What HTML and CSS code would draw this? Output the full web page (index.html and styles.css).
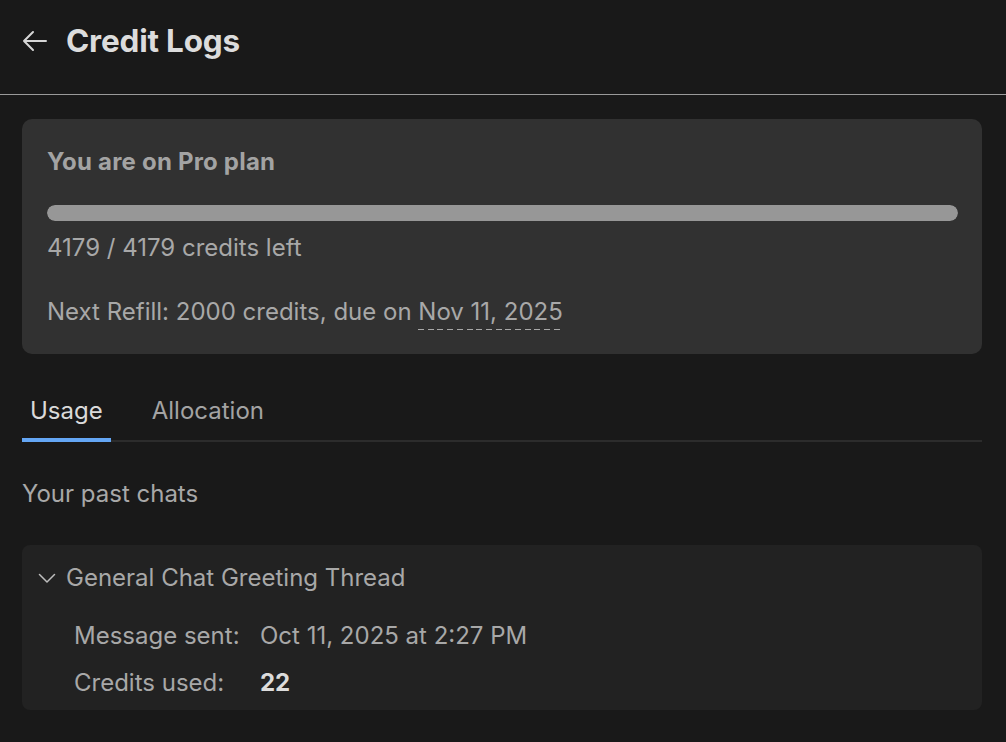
FILE: index.html
```html
<!DOCTYPE html>
<html>
<head>
<meta charset="utf-8">
<link rel="stylesheet" href="styles.css">
</head>
<body>
<header class="topbar">
  <svg class="back" width="26" height="22" viewBox="0 0 26 22" fill="none" stroke="#d6d6d6" stroke-width="2" stroke-linecap="round" stroke-linejoin="round">
    <path d="M24 11H2M11 2L2 11l9 9"/>
  </svg>
  <h1 class="title">Credit Logs</h1>
</header>
<main class="content">
  <section class="plan">
    <div class="plan-title">You are on Pro plan</div>
    <div class="bar"><div class="bar-fill" style="width:100%"></div></div>
    <div class="plan-line">4179 / 4179 credits left</div>
    <div class="plan-line refill">Next Refill: 2000 credits, due on <span class="date">Nov 11, 2025</span></div>
  </section>
  <nav class="tabs">
    <div class="tab active">Usage</div>
    <div class="tab">Allocation</div>
  </nav>
  <div class="subtitle">Your past chats</div>
  <section class="chat">
    <div class="chat-head">
      <svg class="chev" width="18" height="10" viewBox="0 0 18 10" fill="none" stroke="#bdbdbd" stroke-width="1.5" stroke-linecap="round" stroke-linejoin="round"><path d="M1.5 1.5l7.5 7.5 7.5-7.5"/></svg>
      <span class="chat-title">General Chat Greeting Thread</span>
    </div>
    <div class="details">
      <div class="label">Message sent:</div><div class="value">Oct 11, 2025 at 2:27 PM</div>
      <div class="label">Credits used:</div><div class="value strong">22</div>
    </div>
  </section>
</main>
</body>
</html>
```
FILE: styles.css
```css
html, body {
  margin: 0;
  padding: 0;
  background: #191919;
  font-family: Inter, "Noto Sans", sans-serif;
  color: #a8a8a8;
}
.topbar {
  display: flex;
  align-items: center;
  height: 95px;
  box-sizing: border-box;
  padding: 0 0 12px 22px;
  border-bottom: 1px solid #9a9a9a;
  gap: 18px;
}
.back { display: block; margin-top: 0; }
.title {
  margin: 0;
  font-size: 31.5px;
  font-weight: 700;
  color: #dcdcdc;
  letter-spacing: -0.2px;
  line-height: 40px;
}
.content {
  padding: 24px 24px 0 22px;
}
.plan {
  background: #313131;
  border-radius: 10px;
  padding: 27px 24px 26px 25px;
}
.plan-title {
  font-size: 24px;
  font-weight: 700;
  color: #a3a3a3;
  line-height: 32px;
  letter-spacing: 0.2px;
}
.bar {
  margin-top: 27px;
  height: 16px;
  border-radius: 8px;
  background: #3a3a3a;
  overflow: hidden;
}
.bar-fill {
  height: 100%;
  background: #979797;
  border-radius: 8px;
}
.plan-line {
  font-size: 24px;
  line-height: 32px;
  margin-top: 11px;
  color: #a8a8a8;
}
.plan-line.refill { margin-top: 32px; }
.date {
  padding-bottom: 4px;
  background-image: repeating-linear-gradient(to right, #a8a8a8 0 6px, transparent 6px 9.7px);
  background-size: 100% 1.5px;
  background-repeat: no-repeat;
  background-position: left bottom;
}
.tabs {
  display: flex;
  margin-top: 41px;
  border-bottom: 2px solid #2c2c2c;
}
.tab {
  font-size: 24px;
  line-height: 32px;
  padding: 0 8px 11px 8px;
  margin-right: 33px;
  color: #a3a3a3;
  margin-bottom: -2px;
  border-bottom: 4px solid transparent;
}
.tab.active {
  color: #dadada;
  border-bottom-color: #64a6f4;
}
.subtitle {
  font-size: 24px;
  line-height: 32px;
  margin-top: 36px;
  color: #a8a8a8;
}
.chat {
  margin-top: 35px;
  background: #222222;
  border-radius: 8px;
  padding: 17px 0 11px 0;
}
.chat-head {
  display: flex;
  align-items: center;
  padding-left: 16px;
  gap: 10px;
}
.chev { display: block; }
.chat-title {
  font-size: 24px;
  line-height: 32px;
  color: #a8a8a8;
}
.details {
  display: grid;
  grid-template-columns: 186px auto;
  padding-left: 52px;
  margin-top: 26px;
  row-gap: 15px;
}
.label, .value {
  font-size: 24px;
  line-height: 32px;
  color: #a8a8a8;
}
.value.strong {
  font-weight: 700;
  color: #dcdcdc;
}
```
